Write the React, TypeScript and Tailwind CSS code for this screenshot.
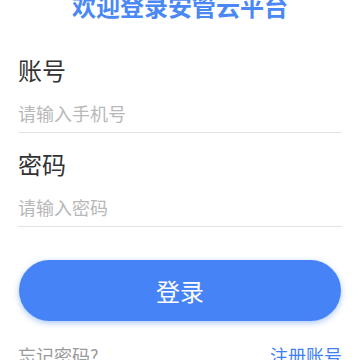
import React from "react";

const font = { fontFamily: '"Noto Sans CJK SC", "Noto Sans", sans-serif' };

function Field({ label, placeholder, type }: { label: string; placeholder: string; type?: string }) {
  return (
    <div className="flex flex-col">
      <label className="text-[24px] leading-[36px] text-[#333333]">{label}</label>
      <input
        type={type ?? "text"}
        placeholder={placeholder}
        className="mt-2 h-[37px] border-b border-[#e3e3e3] bg-transparent pb-[3px] text-[18px] leading-[33px] text-[#333] outline-none placeholder:text-[#b8b8b8]"
        style={font}
      />
    </div>
  );
}

export default function App() {
  return (
    <div className="h-[360px] w-[360px] overflow-hidden bg-white" style={font}>
      <div className="-mt-[10px] flex flex-col px-[18px]">
        <h1 className="text-center text-[24px] font-bold leading-[32px] text-[#4a88f5]">欢迎登录安管云平台</h1>

        <div className="mt-[30px] flex flex-col gap-[13px]">
          <Field label="账号" placeholder="请输入手机号" />
          <Field label="密码" placeholder="请输入密码" type="password" />
        </div>

        <button className="mx-px mt-[33px] h-[61px] rounded-full bg-[#4583f7] text-[24px] text-white shadow-[0_2px_6px_rgba(69,131,247,0.45)]">
          登录
        </button>

        <div className="mt-[21px] flex items-center justify-between text-[18px] leading-[26px]">
          <span className="text-[#9a9a9a]">忘记密码?</span>
          <span className="text-[#3f7ff5]">注册账号</span>
        </div>
      </div>
    </div>
  );
}
